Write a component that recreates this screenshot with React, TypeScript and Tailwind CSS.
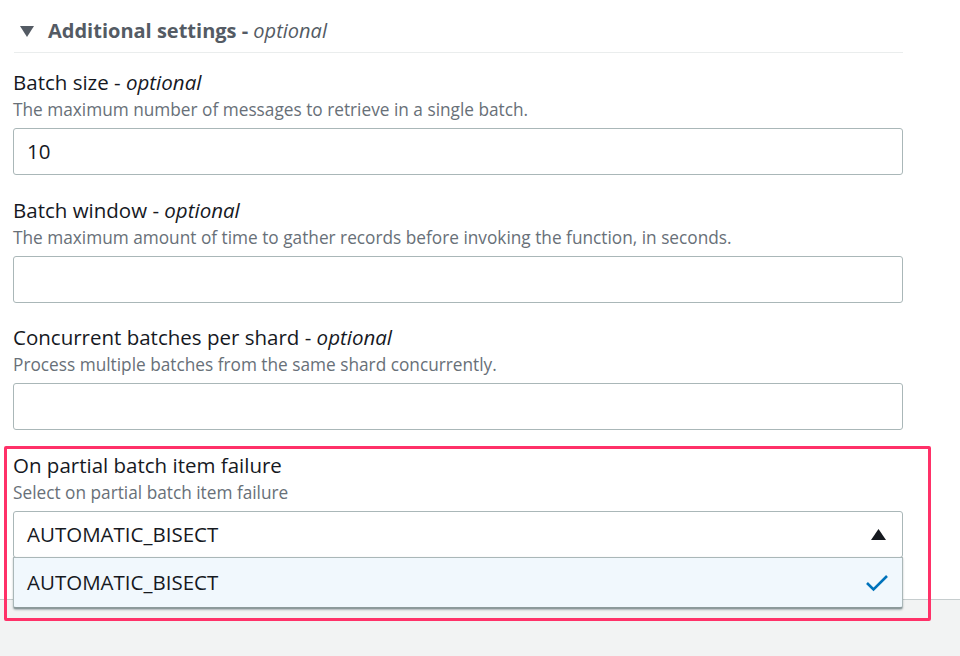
import React from "react";

function Field({ label, optional, desc, value }: { label: string; optional?: boolean; desc: string; value?: string }) {
  return (
    <div className="flex flex-col">
      <div className="text-[20.5px] leading-[24px] text-[#16191f]">
        {label}
        {optional && (
          <>
            {" - "}
            <i>optional</i>
          </>
        )}
      </div>
      <div className="mt-[5px] text-[17.25px] leading-[22px] text-[#687078]">{desc}</div>
      <div className="mt-[7px] h-[47px] rounded-[3px] border border-[#aab7b8] bg-white px-[13px] flex items-center text-[20.5px] text-[#16191f]">
        {value}
      </div>
    </div>
  );
}

export default function App() {
  return (
    <div
      className="relative w-[960px] h-[656px] overflow-hidden bg-[#f2f3f3]"
      style={{ fontFamily: '"Open Sans", "Noto Sans", sans-serif' }}
    >
      <div className="h-[600px] bg-white border-b border-[#c6cdce]">
        <div className="w-[890px] ml-[13px] pt-[17px]">
          <div className="flex items-center h-[28px] ml-[7px] gap-[14px] text-[20px] text-[#545b64]">
            <svg width="14" height="11" viewBox="0 0 14 11">
              <polygon points="0,0 14,0 7,11" fill="#545b64" />
            </svg>
            <span>
              <b>Additional settings</b>
              <b> - </b>
              <i>optional</i>
            </span>
          </div>
          <div className="mt-[7px] ml-px h-px bg-[#eaeded]" />
          <div className="mt-[17px] flex flex-col gap-[22.6px]">
            <Field
              label="Batch size"
              optional
              desc="The maximum number of messages to retrieve in a single batch."
              value="10"
            />
            <Field
              label="Batch window"
              optional
              desc="The maximum amount of time to gather records before invoking the function, in seconds."
            />
            <Field
              label="Concurrent batches per shard"
              optional
              desc="Process multiple batches from the same shard concurrently."
            />
            <div className="relative flex flex-col">
              <div className="text-[20.5px] leading-[24px] text-[#16191f]">On partial batch item failure</div>
              <div className="mt-[5px] text-[17.25px] leading-[22px] text-[#687078]">
                Select on partial batch item failure
              </div>
              <div className="mt-[7px] h-[47px] rounded-[3px] border border-[#aab7b8] bg-white pl-[13px] pr-[16px] flex items-center justify-between text-[20.5px] text-[#16191f]">
                <span>AUTOMATIC_BISECT</span>
                <svg width="15" height="11" viewBox="0 0 15 11">
                  <polygon points="7.5,0 15,11 0,11" fill="#16191f" />
                </svg>
              </div>
              <div className="absolute left-0 right-0 top-[104px] h-[52px] rounded-b-[3px] border border-[#aab7b8] border-b-[2px] border-b-[#8d9a9b] bg-[#f1f8fd] pl-[13px] pr-[13px] flex items-center justify-between text-[20.5px] text-[#16191f] shadow-[0_1px_2px_rgba(0,28,36,0.3)]">
                <span>AUTOMATIC_BISECT</span>
                <svg width="24" height="19" viewBox="0 0 24 19">
                  <polyline points="2,10 8.5,16.5 22,3" fill="none" stroke="#0073bb" strokeWidth="2.6" />
                </svg>
              </div>
            </div>
          </div>
        </div>
      </div>
      <div className="absolute left-[4px] top-[446px] w-[927px] h-[175px] border-[3px] border-[#ff3168] rounded-[2px] pointer-events-none" />
    </div>
  );
}
